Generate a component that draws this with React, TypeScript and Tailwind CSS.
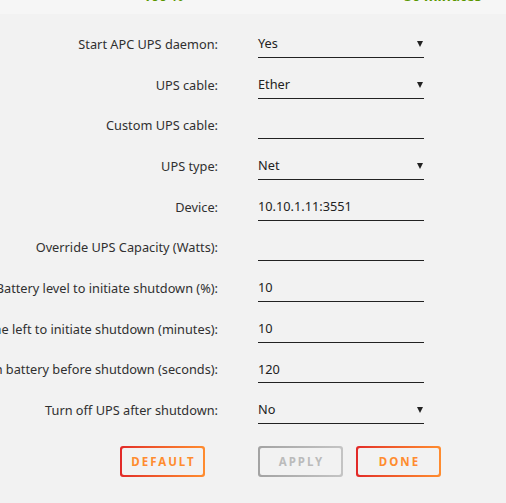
import React from "react";

const rows: { label: string; value: string; select?: boolean }[] = [
  { label: "Start APC UPS daemon:", value: "Yes", select: true },
  { label: "UPS cable:", value: "Ether", select: true },
  { label: "Custom UPS cable:", value: "" },
  { label: "UPS type:", value: "Net", select: true },
  { label: "Device:", value: "10.10.1.11:3551" },
  { label: "Override UPS Capacity (Watts):", value: "" },
  { label: "Battery level to initiate shutdown (%):", value: "10" },
  { label: "Runtime left to initiate shutdown (minutes):", value: "10" },
  { label: "Time on battery before shutdown (seconds):", value: "120" },
  { label: "Turn off UPS after shutdown:", value: "No", select: true },
];

function Btn({ text, disabled }: { text: string; disabled?: boolean }) {
  return (
    <div
      className={
        "w-[85px] h-[31px] rounded-[3px] p-[2px] " +
        (disabled
          ? "bg-gradient-to-r from-[#a3a3a3] to-[#c4c4c4]"
          : "bg-gradient-to-r from-[#e22828] to-[#ff8c2f]")
      }
    >
      <div className="w-full h-full bg-[#f2f2f2] rounded-[2px] flex items-center justify-center">
        <span
          className={
            "text-[11.5px] font-bold tracking-[2px] pl-[2px] " +
            (disabled ? "text-[#bbbbbb]" : "text-[#ff8c2f]")
          }
        >
          {text}
        </span>
      </div>
    </div>
  );
}

export default function App() {
  return (
    <div
      className="w-[506px] h-[503px] bg-[#f2f2f2] text-[#303030] overflow-hidden"
      style={{ fontFamily: '"Noto Sans", "Open Sans", sans-serif' }}
    >
      <div className="h-[14px] bg-[#f6f6f6] overflow-hidden relative">
        <div className="flex text-[14px] font-bold text-[#5a9600] leading-[16px] -mt-[12px]">
          <span className="ml-[143px]">100 %</span>
          <span className="ml-[221px]">30 minutes</span>
        </div>
      </div>
      <div className="pt-[3.33px] overflow-hidden">
        {rows.map((r, i) => (
          <div key={i} className="h-[40.67px] flex items-end">
            <div className="w-[218px] shrink-0 text-right text-[12.75px] leading-[26px] pb-[1px] whitespace-nowrap flex justify-end overflow-visible">
              <span className="whitespace-nowrap">{r.label}</span>
            </div>
            <div className="ml-[40px] w-[166px] h-[26px] border-b border-[#222] flex items-center justify-between text-[12.75px] text-[#222] pb-[1px]">
              <span>{r.value}</span>
              {r.select && (
                <svg width="6" height="6" viewBox="0 0 6 6" className="mr-[1px]">
                  <path d="M0 0 H6 L3 6 Z" fill="#222" />
                </svg>
              )}
            </div>
          </div>
        ))}
      </div>
      <div className="flex mt-[22px]">
        <div className="w-[218px] flex justify-end pr-[13px]">
          <Btn text="DEFAULT" />
        </div>
        <div className="ml-[40px] flex gap-[13px]">
          <Btn text="APPLY" disabled />
          <Btn text="DONE" />
        </div>
      </div>
    </div>
  );
}
